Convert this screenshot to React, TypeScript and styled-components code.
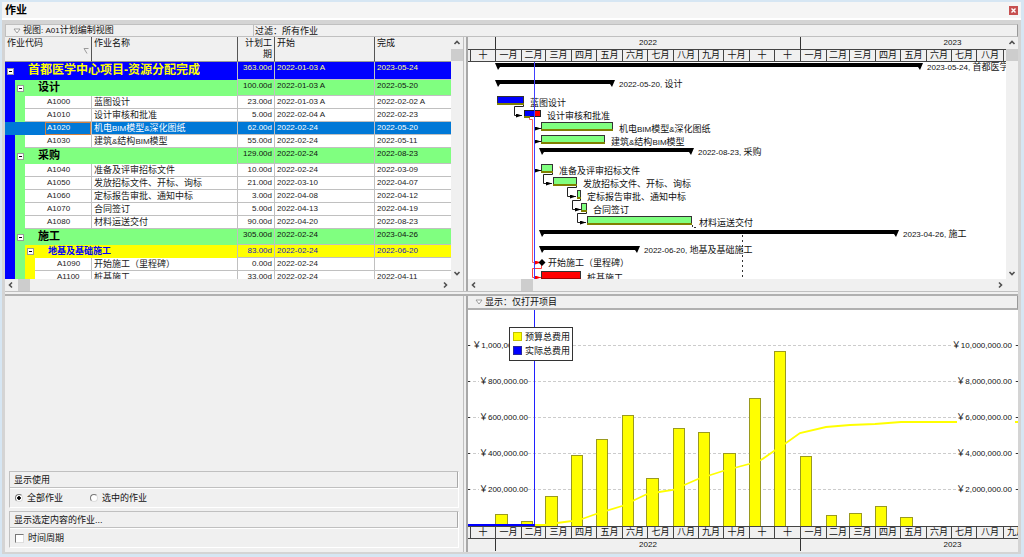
import React from "react";
import styled, { createGlobalStyle, css } from "styled-components";

const GlobalStyle = createGlobalStyle`
  * { box-sizing: border-box; }
  body {
    margin: 0;
    background: #d6e6f3;
    color: #111;
    font: 9px/12px "Liberation Sans", "Noto Sans CJK SC", sans-serif;
  }
  button, input { font: inherit; margin: 0; padding: 0; }
`;

const LINE = "#c0c0c0";
const FACE = "#f0f0f0";

/* ---------- window ---------- */

const Window = styled.div`
  display: flex;
  flex-direction: column;
  height: 100vh;
  padding: 2px 3px 3px 2px;
`;

const TitleBar = styled.header`
  display: flex;
  align-items: center;
  justify-content: space-between;
  height: 18px;
  padding: 0 3px;
  background: #f5f5f5;
  border-bottom: 2px solid #fff;
`;

const Title = styled.h1`
  margin: 0;
  font-size: 11px;
  line-height: 16px;
  font-weight: 700;
  color: #000;
`;

const CloseButton = styled.button`
  display: flex;
  align-items: center;
  justify-content: center;
  width: 9px;
  height: 9px;
  border: 0;
  background: #c75050;
`;

const Body = styled.main`
  flex: 1;
  min-height: 0;
  display: flex;
  flex-direction: column;
  background: ${FACE};
  border: 3px solid #d4d4d4;
  border-top-width: 4px;
  border-bottom-width: 2px;
`;

const ViewBar = styled.div`
  display: flex;
  flex: none;
  height: 13px;
  border: 1px solid ${LINE};
  border-right-color: #999;
`;

const ViewName = styled.div`
  display: flex;
  align-items: center;
  gap: 2px;
  width: 248px;
  padding-left: 7px;
  border-right: 1px solid ${LINE};
`;

const FilterName = styled.div`
  display: flex;
  align-items: center;
  padding-left: 1px;
`;

const Split = styled.div<{ $grow: number; $last?: boolean }>`
  display: flex;
  gap: 2px;
  flex: ${(p) => p.$grow} 1 0;
  min-height: 0;
  ${(p) =>
    p.$last
      ? css`
          margin-top: 2px;
          border-top: 2px solid #b0b0b0;
        `
      : css`
          border-bottom: 1px solid ${LINE};
        `}
`;

const LeftPane = styled.section`
  display: flex;
  flex-direction: column;
  flex: 0 0 459px;
  min-height: 0;
  border-right: 1px solid ${LINE};
`;

const RightPane = styled.section`
  display: flex;
  flex-direction: column;
  flex: 1;
  min-width: 0;
  min-height: 0;
  border-left: 2px solid #a8a8a8;
`;

const ScrollBody = styled.div`
  display: flex;
  flex: 1;
  min-height: 0;
`;

const Clip = styled.div`
  flex: 1;
  min-width: 0;
  overflow: hidden;
  background: #fff;
`;

/* ---------- scroll bars ---------- */

const Track = styled.div<{ $vertical?: boolean }>`
  display: flex;
  flex: none;
  justify-content: space-between;
  background: ${FACE};
  ${(p) =>
    p.$vertical
      ? css`
          flex-direction: column;
          width: 12px;
        `
      : css`
          height: 12px;
          padding-right: 12px;
        `}
`;

const TrackStart = styled.div<{ $vertical?: boolean; $gap?: number }>`
  display: flex;
  flex-direction: ${(p) => (p.$vertical ? "column" : "row")};
  gap: ${(p) => p.$gap || 0}px;
`;

const ArrowButton = styled.button`
  display: flex;
  align-items: center;
  justify-content: center;
  width: 12px;
  height: 12px;
  border: 0;
  background: transparent;
`;

const Thumb = styled.div`
  width: 12px;
  height: 12px;
  background: #cdcdcd;
`;

const ARROWS = {
  up: "M1.5 5 4 2.5 6.5 5",
  down: "M1.5 3 4 5.5 6.5 3",
  left: "M5 1.5 2.5 4 5 6.5",
  right: "M3 1.5 5.5 4 3 6.5",
};

function Arrow({ dir, label }: { dir: keyof typeof ARROWS; label: string }) {
  return (
    <ArrowButton aria-label={label}>
      <svg width="8" height="8" viewBox="0 0 8 8">
        <path d={ARROWS[dir]} fill="none" stroke="#505050" strokeWidth="1.6" />
      </svg>
    </ArrowButton>
  );
}

function VerticalScroll() {
  return (
    <Track $vertical>
      <TrackStart $vertical>
        <Arrow dir="up" label="向上" />
        <Thumb />
      </TrackStart>
      <Arrow dir="down" label="向下" />
    </Track>
  );
}

function HorizontalScroll({ gap }: { gap: number }) {
  return (
    <Track>
      <TrackStart $gap={gap}>
        <Arrow dir="left" label="向左" />
        <Thumb />
      </TrackStart>
      <Arrow dir="right" label="向右" />
    </Track>
  );
}

function Caret() {
  return (
    <svg width="8" height="6" viewBox="0 0 8 6">
      <path d="M1 1H7L4 5Z" fill="#fff" stroke="#888" strokeWidth="0.8" />
    </svg>
  );
}

/* ---------- text: Latin runs are set one size smaller ---------- */

const Latin = styled.span`
  font-size: 8px;
`;

const runs = (text: string) => text.split(/([\x20-\x7e]+)/).filter(Boolean);
const isLatin = (run: string) => /^[\x20-\x7e]/.test(run);

function Mixed({ text }: { text: string }) {
  return <>{runs(text).map((r, i) => (isLatin(r) ? <Latin key={i}>{r}</Latin> : r))}</>;
}

/* ---------- activity table ---------- */

const Table = styled.table`
  width: 100%;
  table-layout: fixed;
  border-collapse: separate;
  border-spacing: 0;
`;

const Th = styled.th<{ $right?: boolean }>`
  height: 25px;
  padding: 1px 2px 0;
  vertical-align: top;
  text-align: ${(p) => (p.$right ? "right" : "left")};
  font-weight: 400;
  line-height: 11px;
  background: ${FACE};
  border-right: 1px solid #555;
  border-bottom: 1px solid #999;
  &:last-child { border-right: 0; }
`;

const HeadCell = styled.div`
  display: flex;
  justify-content: space-between;
  height: 20px;
`;

const SortMark = styled.span`
  align-self: flex-end;
  display: flex;
  padding-bottom: 4px;
`;

type Tone = "project" | "phase" | "sub" | "task" | "selected";

const TONES: Record<Tone, { bg: string; fg: string; height: number; size: number }> = {
  project: { bg: "#0000ff", fg: "#ffff80", height: 18, size: 12 },
  phase: { bg: "#80ff80", fg: "#111", height: 16, size: 11 },
  sub: { bg: "#ffff00", fg: "#2020c0", height: 13, size: 9 },
  task: { bg: "#ffffff", fg: "#222", height: 13, size: 9 },
  selected: { bg: "#0078d7", fg: "#ffffff", height: 13, size: 9 },
};

const Row = styled.tr<{ $tone: Tone }>`
  height: ${(p) => TONES[p.$tone].height}px;
  background: ${(p) => TONES[p.$tone].bg};
  color: ${(p) => TONES[p.$tone].fg};
`;

const Td = styled.td<{ $right?: boolean; $joined?: boolean }>`
  padding: 0 2px;
  height: inherit;
  vertical-align: top;
  line-height: 12px;
  text-align: ${(p) => (p.$right ? "right" : "left")};
  white-space: nowrap;
  border-right: 1px solid ${LINE};
  border-bottom: 1px solid ${LINE};
  &:last-child { border-right: 0; }
  ${(p) =>
    p.$joined &&
    css`
      padding: 0;
      border-bottom: 0;
    `}
`;

const CellText = styled.div`
  height: 12px;
  overflow: hidden;
`;

const Value = styled(CellText)`
  font-size: 8px;
  line-height: 12px;
`;

const Lead = styled.div<{ $tone: Tone }>`
  display: flex;
  height: ${(p) => TONES[p.$tone].height}px;
`;

const Gutter = styled.span<{ $color: string }>`
  flex: 0 0 10px;
  display: flex;
  align-items: center;
  justify-content: center;
  background: ${(p) => p.$color};
`;

const Expander = styled.button`
  display: flex;
  width: 7px;
  height: 7px;
  border: 1px solid #999;
  background: #fff;
  align-items: center;
  justify-content: center;
  &::before {
    content: "";
    width: 3px;
    height: 1px;
    background: #000;
  }
`;

const GroupName = styled.span<{ $tone: Tone }>`
  padding-left: 13px;
  overflow: hidden;
  font-weight: 700;
  font-size: ${(p) => TONES[p.$tone].size}px;
  line-height: ${(p) => TONES[p.$tone].height - 1}px;
  color: ${(p) => (p.$tone === "project" ? "#ffff00" : p.$tone === "sub" ? "#0000ff" : "#000")};
`;

const Code = styled.span<{ $focus?: boolean }>`
  flex: 1;
  padding-left: 22px;
  font-size: 8px;
  line-height: 12px;
  border-bottom: 1px solid ${LINE};
  ${(p) =>
    p.$focus &&
    css`
      margin-left: 20px;
      line-height: 10px;
      padding-left: 1px;
      border: 1px solid #d08040;
    `}
`;

type Activity = {
  tone: Tone;
  level: number;
  code?: string;
  name: string;
  days: string;
  start: string;
  end: string;
};

const ACTIVITIES: Activity[] = [
  { tone: "project", level: 0, name: "首都医学中心项目-资源分配完成", days: "363.00d", start: "2022-01-03 A", end: "2023-05-24" },
  { tone: "phase", level: 1, name: "设计", days: "100.00d", start: "2022-01-03 A", end: "2022-05-20" },
  { tone: "task", level: 2, code: "A1000", name: "蓝图设计", days: "23.00d", start: "2022-01-03 A", end: "2022-02-02 A" },
  { tone: "task", level: 2, code: "A1010", name: "设计审核和批准", days: "5.00d", start: "2022-02-04 A", end: "2022-02-23" },
  { tone: "selected", level: 2, code: "A1020", name: "机电BIM模型&深化图纸", days: "62.00d", start: "2022-02-24", end: "2022-05-20" },
  { tone: "task", level: 2, code: "A1030", name: "建筑&结构BIM模型", days: "55.00d", start: "2022-02-24", end: "2022-05-11" },
  { tone: "phase", level: 1, name: "采购", days: "129.00d", start: "2022-02-24", end: "2022-08-23" },
  { tone: "task", level: 2, code: "A1040", name: "准备及评审招标文件", days: "10.00d", start: "2022-02-24", end: "2022-03-09" },
  { tone: "task", level: 2, code: "A1050", name: "发放招标文件、开标、询标", days: "21.00d", start: "2022-03-10", end: "2022-04-07" },
  { tone: "task", level: 2, code: "A1060", name: "定标报告审批、通知中标", days: "3.00d", start: "2022-04-08", end: "2022-04-12" },
  { tone: "task", level: 2, code: "A1070", name: "合同签订", days: "5.00d", start: "2022-04-13", end: "2022-04-19" },
  { tone: "task", level: 2, code: "A1080", name: "材料运送交付", days: "90.00d", start: "2022-04-20", end: "2022-08-23" },
  { tone: "phase", level: 1, name: "施工", days: "305.00d", start: "2022-02-24", end: "2023-04-26" },
  { tone: "sub", level: 2, name: "地基及基础施工", days: "83.00d", start: "2022-02-24", end: "2022-06-20" },
  { tone: "task", level: 3, code: "A1090", name: "开始施工（里程碑）", days: "0.00d", start: "2022-02-24", end: "" },
  { tone: "task", level: 3, code: "A1100", name: "桩基施工", days: "33.00d", start: "2022-02-24", end: "2022-04-11" },
];

const LEVEL_COLORS = ["#0000ff", "#80ff80", "#ffff00"];

function ActivityRow({ a }: { a: Activity }) {
  const gutters = LEVEL_COLORS.slice(0, a.level).map((c) => (
    <Gutter key={c} $color={a.tone === "selected" ? TONES.selected.bg : c} />
  ));
  return (
    <Row $tone={a.tone}>
      {a.code ? (
        <>
          <Td $joined>
            <Lead $tone={a.tone}>
              {gutters}
              <Code $focus={a.tone === "selected"}>{a.code}</Code>
            </Lead>
          </Td>
          <Td>
            <CellText><Mixed text={a.name} /></CellText>
          </Td>
        </>
      ) : (
        <Td $joined colSpan={2}>
          <Lead $tone={a.tone}>
            {gutters}
            <Gutter $color={TONES[a.tone].bg}>
              <Expander aria-label={"折叠 " + a.name} />
            </Gutter>
            <GroupName $tone={a.tone}>{a.name}</GroupName>
          </Lead>
        </Td>
      )}
      <Td $right><Value>{a.days}</Value></Td>
      <Td><Value>{a.start}</Value></Td>
      <Td><Value>{a.end}</Value></Td>
    </Row>
  );
}

function ActivityTable() {
  return (
    <Table>
      <colgroup>
        <col style={{ width: 87 }} />
        <col style={{ width: 146 }} />
        <col style={{ width: 37 }} />
        <col style={{ width: 100 }} />
        <col />
      </colgroup>
      <thead>
        <tr>
          <Th>
            <HeadCell>
              作业代码
              <SortMark>
                <svg width="6" height="6" viewBox="0 0 6 6">
                  <path d="M5.5 0.5H1L4 5.5" fill="none" stroke="#999" />
                </svg>
              </SortMark>
            </HeadCell>
          </Th>
          <Th>作业名称</Th>
          <Th $right>计划工期</Th>
          <Th>开始</Th>
          <Th>完成</Th>
        </tr>
      </thead>
      <tbody>
        {ACTIVITIES.map((a) => (
          <ActivityRow key={a.code || a.name} a={a} />
        ))}
      </tbody>
    </Table>
  );
}

/* ---------- time scale ---------- */

const Scale = styled.div<{ $below?: boolean }>`
  display: flex;
  flex: none;
  flex-direction: ${(p) => (p.$below ? "column-reverse" : "column")};
  overflow: hidden;
  background: ${FACE};
`;

const YearRow = styled.div`
  display: flex;
  height: 12px;
`;

const Year = styled.div`
  flex: none;
  border-right: 1px solid #333;
  text-align: center;
  font-size: 8px;
  line-height: 12px;
`;

const MonthRow = styled.div`
  display: flex;
  height: 13px;
  border-top: 1px solid #444;
  border-bottom: 1px solid #444;
`;

const Month = styled.div`
  flex: none;
  overflow: hidden;
  border-right: 1px solid #444;
  text-align: center;
  line-height: 11px;
`;

const MONTHS: [string, number][] = [
  ["", 3], ["十", 25],
  ["一月", 26], ["二月", 24], ["三月", 26], ["四月", 25], ["五月", 26], ["六月", 25],
  ["七月", 26], ["八月", 25], ["九月", 25], ["十月", 26], ["十", 25], ["十", 26],
  ["一月", 26], ["二月", 23], ["三月", 26], ["四月", 25], ["五月", 26], ["六月", 25],
  ["七月", 25], ["八月", 27], ["九月", 25],
];
const YEARS: [string, number][] = [["", 28], ["2022", 305], ["2023", 304]];

function TimeScale({ below }: { below?: boolean }) {
  return (
    <Scale $below={below}>
      <YearRow>
        {YEARS.map(([y, w]) => <Year key={y} style={{ width: w }}>{y}</Year>)}
      </YearRow>
      <MonthRow>
        {MONTHS.map(([m, w], i) => <Month key={i} style={{ width: w }}>{m}</Month>)}
      </MonthRow>
    </Scale>
  );
}

/* ---------- Gantt chart ---------- */

const Chart = styled.svg`
  display: block;
  width: 100%;
  overflow: hidden;
`;

const ChartText = styled.text`
  font-size: 9px;
  fill: #111;
`;

function Label({ x, y, text, end }: { x: number | string; y: number; text: string; end?: boolean }) {
  return (
    <ChartText x={x} y={y} textAnchor={end ? "end" : "start"}>
      {runs(text).map((r, i) => (isLatin(r) ? <tspan key={i} fontSize="8">{r}</tspan> : r))}
    </ChartText>
  );
}

/* x1, x2, y, label */
const SUMMARIES: [number, number, number, string][] = [
  [27, 455, 2, "2023-05-24, 首都医学中心项目-资源分配完成"],
  [27, 147, 19, "2022-05-20, 设计"],
  [71, 226, 87, "2022-08-23, 采购"],
  [71, 431, 169, "2023-04-26, 施工"],
  [71, 172, 185, "2022-06-20, 地基及基础施工"],
];

/* x, width, y, colour, label, label x */
const BARS: [number, number, number, string, string, number][] = [
  [29, 26, 35, "#0000ff", "蓝图设计", 62],
  [73, 71, 61, "#80ff80", "机电BIM模型&深化图纸", 151],
  [73, 63, 74, "#80ff80", "建筑&结构BIM模型", 143],
  [73, 11, 103, "#80ff80", "准备及评审招标文件", 91],
  [85, 23, 116, "#80ff80", "发放招标文件、开标、询标", 115],
  [109, 3, 129, "#80ff80", "定标报告审批、通知中标", 119],
  [113, 5, 142, "#80ff80", "合同签订", 125],
  [119, 104, 155, "#80ff80", "材料运送交付", 231],
  [73, 39, 210, "#ff0000", "桩基施工", 119],
];

const LINKS = [
  "M55.5 43V44.5H46.5V53.5H54",
  "M66 66.5H73", "M66 79.5H73", "M66 108.5H73",
  "M84.5 111V112.5H75.5V121.5H84",
  "M108.5 124V125.5H99.5V134.5H108",
  "M112.5 137V138.5H104.5V147.5H113",
  "M118.5 150V151.5H109.5V160.5H118",
];

function Gantt() {
  return (
    <Chart height="230">
      <defs>
        <marker id="tip" viewBox="0 0 6 4" refX="6" refY="2" markerWidth="6" markerHeight="4" markerUnits="userSpaceOnUse">
          <path d="M0 0L6 2L0 4Z" />
        </marker>
        <marker id="tipRed" viewBox="0 0 6 4" refX="6" refY="2" markerWidth="6" markerHeight="4" markerUnits="userSpaceOnUse">
          <path d="M0 0L6 2L0 4Z" fill="#ff0000" />
        </marker>
      </defs>
      <path d="M61.5 55V57.5H64.5V200.5H73" fill="none" stroke="#ff6060" markerEnd="url(#tipRed)" />
      <path d="M73.5 203V206.5H64.5V215.5H73" fill="none" stroke="#ff4040" markerEnd="url(#tipRed)" />
      {LINKS.map((d) => <path key={d} d={d} fill="none" stroke="#222" markerEnd="url(#tip)" />)}
      <path d="M224.5 163V165.5H230" fill="none" stroke="#333" strokeDasharray="2 2" />
      <path d="M274.5 168V230" stroke="#333" strokeDasharray="2 3" />
      {SUMMARIES.map(([x1, x2, y, text]) => (
        <g key={text}>
          <path d={`M${x1} ${y - 1}H${x2}L${x2 - 3} ${y + 6}L${x2 - 5} ${y + 3}H${x1 + 5}L${x1 + 3} ${y + 6}Z`} />
          <Label x={x2 + 4} y={y + 6} text={text} />
        </g>
      ))}
      {BARS.map(([x, w, y, color, text, lx]) => (
        <g key={text}>
          <rect x={x + 0.5} y={y - 0.5} width={w} height="7" fill={color} stroke="#333" />
          <rect x={x} y={y + 6} width={w + 1} height="2" fill={color === "#ff0000" ? "#a00000" : "#808000"} />
          <Label x={lx} y={y + 9} text={text} />
        </g>
      ))}
      <rect x="56.5" y="48.5" width="10" height="6" fill="#0000ff" stroke="#222" />
      <rect x="66.5" y="48.5" width="6" height="6" fill="#ff0000" stroke="#222" />
      <rect x="56" y="54" width="6" height="2" fill="#808000" />
      <Label x={79} y={57} text="设计审核和批准" />
      <path d="M74 197L77.5 200.5L74 204L70.5 200.5Z" />
      <Label x={80} y={204} text="开始施工（里程碑）" />
      <path d="M66.5 0V230" stroke="#4040ff" />
    </Chart>
  );
}

/* ---------- resource histogram ---------- */

const PanelHeader = styled.div`
  display: flex;
  flex: none;
  align-items: center;
  gap: 2px;
  height: 14px;
  padding-left: 7px;
  border-right: 1px solid #999;
  border-bottom: 2px solid #b0b0b0;
`;

const Plot = styled.div`
  position: relative;
  display: flex;
  flex: 1;
  flex-direction: column;
  justify-content: flex-end;
  min-height: 0;
  background: #fff;
`;

const Legend = styled.ul`
  position: absolute;
  left: 41px;
  top: 17px;
  display: grid;
  gap: 2px;
  margin: 0;
  padding: 3px 2px 3px 3px;
  list-style: none;
  background: #fff;
  border: 1px solid #333;
`;

const LegendItem = styled.li<{ $color: string }>`
  display: flex;
  align-items: center;
  gap: 3px;
  &::before {
    content: "";
    width: 7px;
    height: 7px;
    background: ${(p) => p.$color};
    border: 1px solid #66660066;
  }
`;

const Foot = styled.div`
  height: 1px;
  background: ${FACE};
`;

/* x, width, height */
const COSTS: [number, number, number][] = [
  [27, 12, 11], [53, 11, 4], [77, 12, 29], [103, 11, 70], [128, 11, 86], [154, 11, 110],
  [178, 12, 47], [205, 11, 97], [230, 11, 93], [255, 12, 72], [281, 11, 127], [306, 11, 174],
  [332, 11, 69], [358, 10, 10], [381, 12, 12], [407, 11, 19], [432, 12, 8],
];
const BASE = 216;
const TICKS = [1, 2, 3, 4, 5];

function Histogram() {
  return (
    <Plot>
      <Chart height={BASE}>
        {TICKS.map((t) => (
          <line key={t} x1="0" x2="100%" y1={BASE - t * 36 - 0.5} y2={BASE - t * 36 - 0.5} stroke="#ccc" strokeDasharray="3 2" />
        ))}
        {COSTS.map(([x, w, h]) => (
          <rect key={x} x={x + 0.5} y={BASE - h - 0.5} width={w} height={h + 2} fill="#ffff00" stroke="#9a9a20" />
        ))}
        <polyline
          points="66,215 77,215 89,213 104,211 114,209 128,204 154,196 179,184 191,182 205,180 230,169 255,161 281,154 293,150 306,141 318,133 332,123 358,117 382,115 407,114 433,112 458,112 600,112"
          fill="none"
          stroke="#ffff00"
          strokeWidth="1.8"
        />
        <path d="M66.5 0V216" stroke="#2020ff" />
        <path d="M0 215H67" stroke="#0000ff" strokeWidth="2" />
        {TICKS.map((t) => {
          const y = BASE - t * 36 - 1;
          return (
            <g key={t}>
              <rect x={t === 5 ? 4 : 11} y={y - 5} width={t === 5 ? 56 : 49} height="11" fill="#fff" />
              <Label x={60} y={y + 3} text={t === 5 ? "￥1,000,000.00" : `￥${t * 2}00,000.00`} end />
              <svg x="100%" overflow="visible">
                <rect x={t === 5 ? -66 : -61} y={y - 5} width={t === 5 ? 63 : 58} height="11" fill="#fff" />
                <Label x={-6} y={y + 3} text={`￥${t * 2},000,000.00`} end />
                <path d={`M-2 ${y + 0.5}H0`} stroke="#333" />
              </svg>
              <path d={`M0 ${y + 0.5}H2`} stroke="#333" />
            </g>
          );
        })}
      </Chart>
      <Legend>
        <LegendItem $color="#ffff00">预算总费用</LegendItem>
        <LegendItem $color="#0000ff">实际总费用</LegendItem>
      </Legend>
    </Plot>
  );
}

/* ---------- display options ---------- */

const Options = styled.form`
  display: flex;
  flex: 1;
  flex-direction: column;
  justify-content: flex-end;
  gap: 3px;
  padding: 0 4px 4px;
`;

const OptionGroup = styled.section`
  border: 1px solid ${LINE};
  border-right-color: #fff;
  border-bottom-color: #fff;
`;

const OptionTitle = styled.h2`
  margin: 0;
  height: 16px;
  padding-left: 4px;
  font-size: 9px;
  line-height: 16px;
  font-weight: 400;
  border-right: 1px solid #a8a8a8;
  border-bottom: 1px solid ${LINE};
`;

const OptionRow = styled.div`
  display: flex;
  gap: 27px;
  height: 19px;
  padding-left: 5px;
  border-top: 1px solid #fff;
`;

const Choice = styled.label`
  display: flex;
  align-items: center;
  gap: 4px;
`;

const Radio = styled.input`
  appearance: none;
  width: 8px;
  height: 8px;
  border: 1px solid;
  border-color: #777 #ddd #ddd #777;
  border-radius: 50%;
  background: #fff;
  &:checked { background: radial-gradient(circle, #000 0 1.5px, #fff 2px); }
`;

const Check = styled.input`
  appearance: none;
  width: 9px;
  height: 9px;
  border: 1px solid;
  border-color: #777 #ddd #ddd #777;
  background: #fff;
`;

function DisplayOptions() {
  return (
    <Options>
      <OptionGroup>
        <OptionTitle>显示使用</OptionTitle>
        <OptionRow>
          <Choice><Radio type="radio" name="use" defaultChecked />全部作业</Choice>
          <Choice><Radio type="radio" name="use" />选中的作业</Choice>
        </OptionRow>
      </OptionGroup>
      <OptionGroup>
        <OptionTitle>显示选定内容的作业...</OptionTitle>
        <OptionRow>
          <Choice><Check type="checkbox" />时间周期</Choice>
        </OptionRow>
      </OptionGroup>
    </Options>
  );
}

export default function App() {
  return (
    <>
      <GlobalStyle />
      <Window>
        <TitleBar>
          <Title>作业</Title>
          <CloseButton aria-label="关闭">
            <svg width="5" height="5" viewBox="0 0 5 5">
              <path d="M0.5 0.5L4.5 4.5M4.5 0.5L0.5 4.5" stroke="#fff" strokeWidth="1.4" />
            </svg>
          </CloseButton>
        </TitleBar>
        <Body>
          <ViewBar>
            <ViewName><Caret /><span><Mixed text="视图: A01计划编制视图" /></span></ViewName>
            <FilterName>过滤：所有作业</FilterName>
          </ViewBar>
          <Split $grow={254}>
            <LeftPane>
              <ScrollBody>
                <Clip><ActivityTable /></Clip>
                <VerticalScroll />
              </ScrollBody>
              <HorizontalScroll gap={1} />
            </LeftPane>
            <RightPane>
              <ScrollBody>
                <Clip>
                  <TimeScale />
                  <Gantt />
                </Clip>
                <VerticalScroll />
              </ScrollBody>
              <HorizontalScroll gap={41} />
            </RightPane>
          </Split>
          <Split $grow={257} $last>
            <LeftPane>
              <DisplayOptions />
            </LeftPane>
            <RightPane>
              <PanelHeader><Caret />显示：仅打开项目</PanelHeader>
              <Histogram />
              <TimeScale below />
              <Foot />
            </RightPane>
          </Split>
        </Body>
      </Window>
    </>
  );
}
